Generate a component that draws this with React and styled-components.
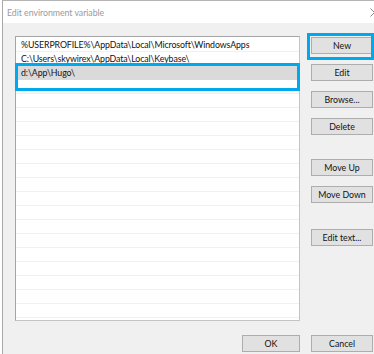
import styled, { createGlobalStyle } from 'styled-components';

const GlobalStyle = createGlobalStyle`
  html, body {
    margin: 0;
    padding: 0;
    overflow: hidden;
    background: #ffffff;
    font-family: Lato, "Noto Sans", sans-serif;
  }
`;

const paths = [
  '%USERPROFILE%\\AppData\\Local\\Microsoft\\WindowsApps',
  'C:\\Users\\skywirex\\AppData\\Local\\Keybase\\',
  'd:\\App\\Hugo\\',
];

export default function App() {
  return (
    <>
      <GlobalStyle />
      <Window>
        <TitleBar>
          <Title>Edit environment variable</Title>
          <CloseButton>
            <svg width="9" height="9" viewBox="0 0 9 9">
              <path d="M0.5 0.5 L8.5 8.5 M8.5 0.5 L0.5 8.5" stroke="#8a8a8a" strokeWidth="1" fill="none" />
            </svg>
          </CloseButton>
        </TitleBar>
        <Content>
          <List>
            {paths.map((p, i) => (
              <Row key={p} selected={i === 2}>{p}</Row>
            ))}
            <RowMark />
          </List>
          <Side>
            <Marked>
              <Button>New</Button>
              <ButtonMark />
            </Marked>
            <Button>Edit</Button>
            <Button>Browse...</Button>
            <Button>Delete</Button>
            <Button extra={14}>Move Up</Button>
            <Button>Move Down</Button>
            <Button extra={16}>Edit text...</Button>
          </Side>
          <Footer>
            <Button width={58}>OK</Button>
          </Footer>
          <Footer>
            <Button>Cancel</Button>
          </Footer>
        </Content>
      </Window>
    </>
  );
}

const Window = styled.div`
  margin-left: 2px;
  width: 372px;
  height: 353px;
  overflow: hidden;
  border-top: 1px solid #b4b4b4;
  border-left: 1px solid #a8a8a8;
  background: #f0f0f0;
`;

const TitleBar = styled.div`
  display: flex;
  align-items: center;
  height: 22px;
  background: #ffffff;
  padding-left: 4px;
`;

const Title = styled.div`
  flex: 1;
  font-size: 8.8px;
  letter-spacing: -0.05px;
  color: #9a9a9a;
`;

const CloseButton = styled.div`
  flex-shrink: 0;
  width: 46px;
  height: 22px;
  margin-right: -22px;
  display: flex;
  align-items: center;
  justify-content: center;
`;

const Content = styled.div`
  display: grid;
  grid-template-columns: 285px 62px;
  column-gap: 11px;
  padding: 13px 0 0 12px;
`;

const List = styled.div`
  position: relative;
  box-sizing: border-box;
  height: 285px;
  padding-top: 1px;
  background-color: #ffffff;
  background-image: repeating-linear-gradient(
    to bottom,
    transparent 0px,
    transparent 13px,
    #f0f0f0 13px,
    #f0f0f0 14px
  );
  background-position: 0 1px;
  border: 1px solid #a5a5a5;
  border-right-color: #c4c4c4;
  border-bottom-color: #c4c4c4;
`;

const Row = styled.div`
  height: 14px;
  line-height: 14px;
  padding-left: 5px;
  font-size: 8.8px;
  letter-spacing: -0.1px;
  color: #111111;
  white-space: nowrap;
  background: ${(p) => (p.selected ? '#dadada' : 'transparent')};
`;

const RowMark = styled.div`
  position: absolute;
  top: 26px;
  left: -1px;
  width: 285px;
  height: 28px;
  box-sizing: border-box;
  border: 3px solid #00a8ec;
`;

const Side = styled.div`
  display: flex;
  flex-direction: column;
  gap: 10px;
  padding-top: 1px;
`;

const Marked = styled.div`
  position: relative;
  display: flex;
`;

const ButtonMark = styled.div`
  position: absolute;
  top: -4px;
  left: -4px;
  width: 67px;
  height: 27px;
  box-sizing: border-box;
  border: 3px solid #00a8ec;
`;

const Button = styled.div`
  box-sizing: border-box;
  width: ${(p) => (p.width ? `${p.width}px` : '62px')};
  height: 17px;
  margin-top: ${(p) => (p.extra ? `${p.extra}px` : '0')};
  display: flex;
  align-items: center;
  justify-content: center;
  background: #e1e1e1;
  border: 1px solid #adadad;
  font-size: 8.8px;
  color: #111111;
`;

const Footer = styled.div`
  display: flex;
  justify-content: flex-end;
  margin-top: 14px;
`;
